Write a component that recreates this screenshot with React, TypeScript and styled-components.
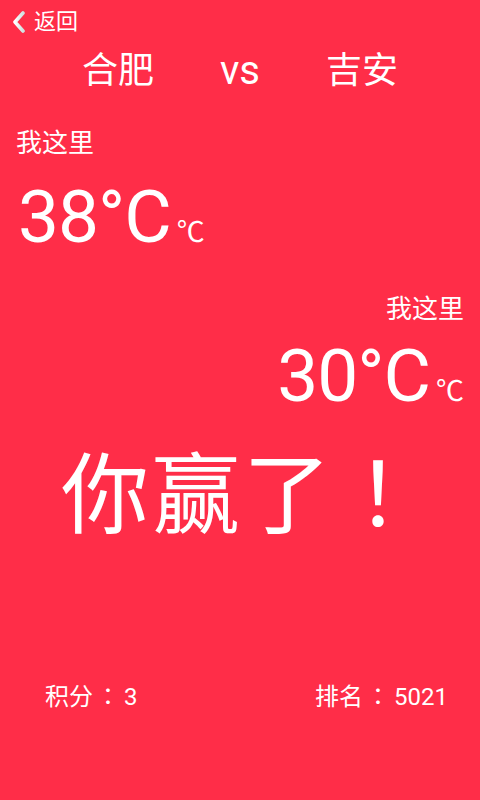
import React from "react";
import styled, { createGlobalStyle } from "styled-components";

const Global = createGlobalStyle`
  html, body { margin: 0; padding: 0; background: #ff2d48; }
  body { font-family: Roboto, "Noto Sans CJK SC", sans-serif; color: #fff; }
`;

const Page = styled.div`
  width: 480px;
  height: 800px;
  background: #ff2d48;
  display: flex;
  flex-direction: column;
  overflow: hidden;
`;

const TopBar = styled.div`
  display: flex;
  align-items: center;
  gap: 8px;
  padding: 9px 0 0 12px;
  height: 26px;
`;

const BackText = styled.span`
  font-size: 22px;
  line-height: 26px;
`;

const Cities = styled.div`
  display: flex;
  justify-content: center;
  align-items: center;
  gap: 66px;
  margin-top: 14px;
  height: 44px;
  font-size: 36px;
  line-height: 44px;
`;

const Vs = styled.span`
  font-size: 40px;
`;

const Block = styled.div<{ $right?: boolean; $top: number }>`
  display: flex;
  flex-direction: column;
  align-items: ${(p) => (p.$right ? "flex-end" : "flex-start")};
  margin-top: ${(p) => p.$top}px;
  padding: ${(p) => (p.$right ? "0 16px 0 0" : "0 0 0 16px")};
`;

const Label = styled.div`
  font-size: 26px;
  line-height: 32px;
`;

const TempRow = styled.div<{ $gap: number }>`
  display: flex;
  align-items: baseline;
  gap: 6px;
  margin-top: ${(p) => p.$gap}px;
  margin-left: 2px;
`;

const TempBig = styled.span`
  font-size: 73px;
  line-height: 80px;
  letter-spacing: -1px;
`;

const TempUnit = styled.span`
  font-size: 28px;
  line-height: 30px;
`;

const Win = styled.div`
  margin-top: 20px;
  padding-left: 61px;
  font-size: 88px;
  line-height: 104px;
  letter-spacing: 3px;
  font-family: "Noto Sans CJK SC", sans-serif;
  white-space: nowrap;
`;

const Punct = styled.span`
  font-family: "Noto Sans CJK JP", sans-serif;
`;

const Spacer = styled.div`
  flex: 1;
`;

const Footer = styled.div`
  display: flex;
  justify-content: space-between;
  padding: 0 32px 88px 45px;
  font-size: 24px;
  line-height: 30px;
`;

const Colon = styled.span`
  font-family: "Noto Sans CJK JP", sans-serif;
  margin: 0 4px 0 3px;
`;

const Chevron = () => (
  <svg width="14" height="22" viewBox="0 0 14 22">
    <defs>
      <linearGradient id="chev" x1="0" y1="0" x2="1" y2="0">
        <stop offset="0" stopColor="#ffffff" />
        <stop offset="1" stopColor="#cfe0e0" />
      </linearGradient>
    </defs>
    <polyline
      points="11,2 3,11 11,20"
      fill="none"
      stroke="url(#chev)"
      strokeWidth="3.6"
      strokeLinecap="round"
      strokeLinejoin="round"
    />
  </svg>
);

export default function App() {
  return (
    <Page>
      <Global />
      <TopBar>
        <Chevron />
        <BackText>返回</BackText>
      </TopBar>
      <Cities>
        <span>合肥</span>
        <Vs>vs</Vs>
        <span>吉安</span>
      </Cities>
      <Block $top={34}>
        <Label>我这里</Label>
        <TempRow $gap={18}>
          <TempBig>38°C</TempBig>
          <TempUnit>℃</TempUnit>
        </TempRow>
      </Block>
      <Block $right $top={36}>
        <Label>我这里</Label>
        <TempRow $gap={11}>
          <TempBig>30°C</TempBig>
          <TempUnit>℃</TempUnit>
        </TempRow>
      </Block>
      <Win>
        你赢了<Punct>！</Punct>
      </Win>
      <Spacer />
      <Footer>
        <span>
          积分<Colon>：</Colon>3
        </span>
        <span>
          排名<Colon>：</Colon>5021
        </span>
      </Footer>
    </Page>
  );
}
